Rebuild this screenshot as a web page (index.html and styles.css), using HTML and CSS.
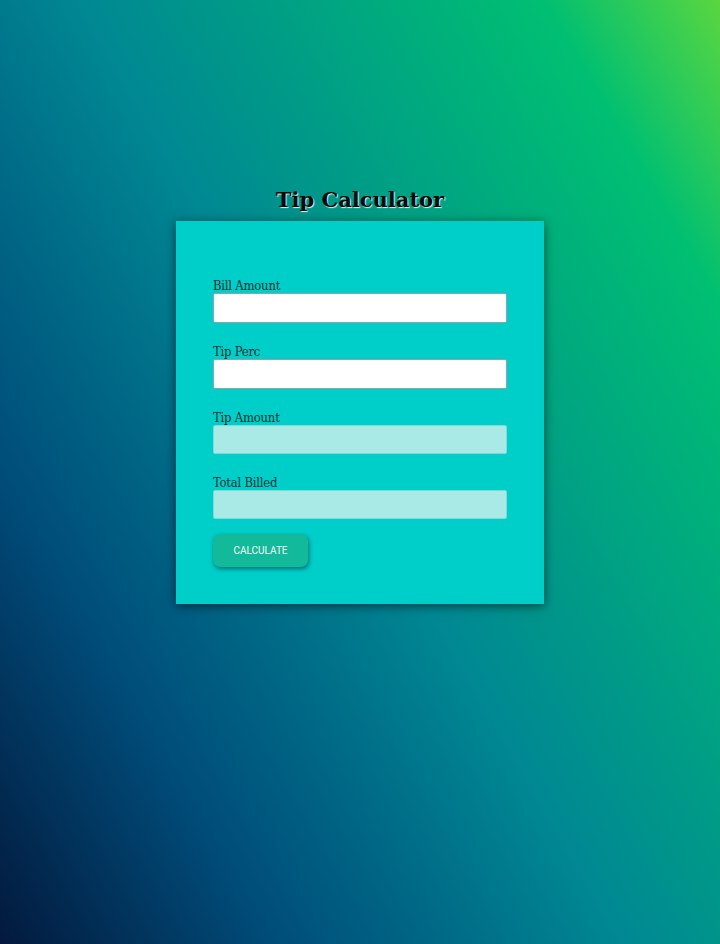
FILE: index.html
```html
<!DOCTYPE html>
<html>
<head>
<meta charset="utf-8">
<link rel="stylesheet" href="styles.css">
</head>
<body>
<main class="page">
  <h1 class="title">Tip Calculator</h1>
  <section class="card">
    <div class="field">
      <label class="label">Bill Amount</label>
      <input class="input" type="text">
    </div>
    <div class="field">
      <label class="label">Tip Perc</label>
      <input class="input" type="text">
    </div>
    <div class="field">
      <label class="label">Tip Amount</label>
      <input class="input input-disabled" type="text" disabled>
    </div>
    <div class="field field-last">
      <label class="label">Total Billed</label>
      <input class="input input-disabled" type="text" disabled>
    </div>
    <button class="btn">CALCULATE</button>
  </section>
</main>
</body>
</html>
```
FILE: styles.css
```css
html, body {
  margin: 0;
  padding: 0;
}
body {
  min-height: 944px;
  background: linear-gradient(60deg, #03193d 0%, #004d7a 22%, #008793 49%, #00bf72 86%, #5ad640 100%);
  font-family: "DejaVu Serif", serif;
}
.page {
  display: flex;
  flex-direction: column;
  align-items: center;
  padding-top: 185px;
}
.title {
  margin: 0 0 6px;
  font-size: 21px;
  font-weight: bold;
  color: #0a0a0a;
  text-shadow: 1px 1px 1px #e8f0f0;
  line-height: 30px;
}
.card {
  box-sizing: border-box;
  width: 368px;
  height: 383px;
  background: #00cec9;
  box-shadow: 0 2px 10px rgba(0, 0, 0, 0.55);
  padding: 57px 37px 37px;
  display: flex;
  flex-direction: column;
}
.field {
  display: flex;
  flex-direction: column;
  margin-bottom: 21px;
}
.field-last {
  margin-bottom: 15px;
}
.label {
  font-size: 13px;
  font-stretch: semi-condensed;
  letter-spacing: -0.25px;
  color: #0c3434;
  line-height: 15px;
}
.input {
  box-sizing: border-box;
  height: 30px;
  width: 294px;
  margin: 0;
  border: 1px solid #8aa7a8;
  border-radius: 2px;
  background: #ffffff;
}
.input-disabled {
  height: 29px;
  background: #a9e9e6;
  border-color: #7fd9d6;
}
.btn {
  width: 95px;
  height: 33px;
  border: none;
  border-radius: 7px;
  background: #12b99b;
  color: #f2fcf8;
  font-family: Roboto, sans-serif;
  font-size: 10px;
  box-shadow: 1px 2px 4px rgba(0, 0, 0, 0.45);
  padding: 0;
}
```
